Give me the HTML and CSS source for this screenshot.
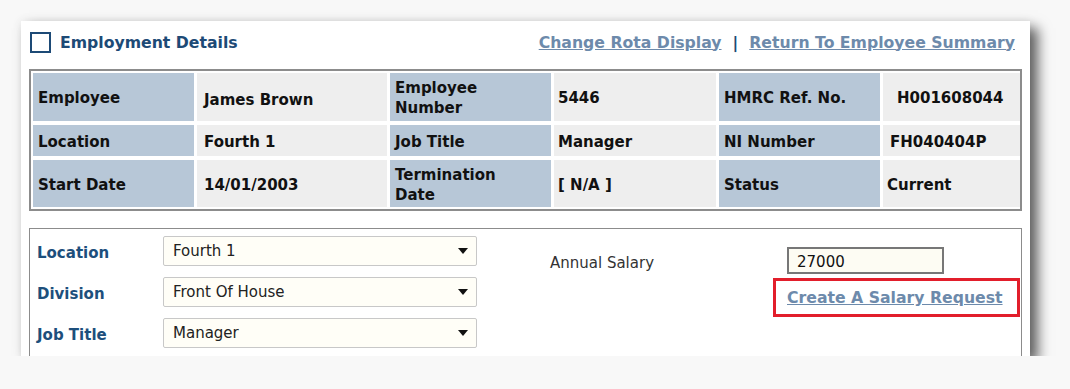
FILE: index.html
```html
<!DOCTYPE html>
<html lang="en">
    <head>
        <meta charset="UTF-8">
        <link rel="stylesheet" href="styles.css">
        <title>Employment Details</title>
    </head>
    <body>
        <div class="panel">
            <div class="panel-header">
                <div class="title">
                    <span class="checkbox"></span>
                    <span>Employment Details</span>
                </div>
                <div class="links">
                    <a href="#">Change Rota Display</a>
                    <span class="sep">|</span>
                    <a href="#">Return To Employee Summary</a>
                </div>
            </div>

            <div class="details">
                <div class="label">Employee</div>
                <div class="value v1 first">James Brown</div>
                <div class="label">Employee<br>Number</div>
                <div class="value v2">5446</div>
                <div class="label">HMRC Ref. No.</div>
                <div class="value v3">H001608044</div>

                <div class="label">Location</div>
                <div class="value v1">Fourth 1</div>
                <div class="label">Job Title</div>
                <div class="value v2">Manager</div>
                <div class="label">NI Number</div>
                <div class="value v3 ni">FH040404P</div>

                <div class="label">Start Date</div>
                <div class="value v1">14/01/2003</div>
                <div class="label">Termination<br>Date</div>
                <div class="value v2">[ N/A ]</div>
                <div class="label">Status</div>
                <div class="value v3 status">Current</div>
            </div>

            <div class="edit-box">
                <div class="selects">
                    <div class="form-row">
                        <label>Location</label>
                        <div class="select"><span>Fourth 1</span><span class="arrow"></span></div>
                    </div>
                    <div class="form-row">
                        <label>Division</label>
                        <div class="select"><span>Front Of House</span><span class="arrow"></span></div>
                    </div>
                    <div class="form-row">
                        <label>Job Title</label>
                        <div class="select"><span>Manager</span><span class="arrow"></span></div>
                    </div>
                </div>
                <div class="salary">
                    <div class="salary-label">Annual Salary</div>
                    <div class="salary-field">
                        <input type="text" class="salary-input" value="27000">
                        <div class="request-box">
                            <a href="#">Create A Salary Request</a>
                        </div>
                    </div>
                </div>
            </div>
        </div>
    </body>
</html>
```

FILE: styles.css
```css
body {
    margin: 0;
    background-color: #f8f8f8;
    font-family: "DejaVu Sans", sans-serif;
}

.panel {
    margin: 21px 0 0 21px;
    width: 1009px;
    height: 335px;
    padding: 0 8px;
    box-sizing: border-box;
    overflow: hidden;
    background-color: #fff;
    box-shadow: 8px 7px 12px rgba(0, 0, 0, 0.6), 0 0 10px rgba(0, 0, 0, 0.08);
}

.panel-header {
    height: 46px;
    display: flex;
    align-items: center;
    justify-content: space-between;
    padding: 0 7px 4px 1px;
    box-sizing: border-box;
    margin-bottom: 2px;
}

.title {
    display: flex;
    align-items: center;
    gap: 9px;
    color: #1d4a76;
    font-weight: bold;
    font-size: 15.7px;
}

.checkbox {
    width: 17px;
    height: 17px;
    border: 2.5px solid #1d4a76;
}

.links {
    display: flex;
    align-items: center;
    gap: 11px;
    font-size: 15.7px;
    font-weight: bold;
}

.links a {
    color: #6d8aab;
}

.sep {
    color: #1d4a76;
}

.details {
    border: 2px solid #8c8c8c;
    padding: 2px;
    display: grid;
    grid-template-columns: 161px 190px 161px 162px 161px 137px;
    grid-template-rows: 48px 31px 47px;
    column-gap: 3px;
    row-gap: 4px;
    font-size: 15px;
    font-weight: bold;
    color: #111;
}

.label,
.value {
    display: flex;
    align-items: center;
    line-height: 20px;
    padding-top: 2px;
}

.label {
    background-color: #b7c7d7;
    padding-left: 5px;
}

.value {
    background-color: #eeeeee;
}

.v1 {
    padding-left: 7px;
}

.first {
    padding-top: 6px;
}

.v2 {
    padding-left: 4px;
}

.v3 {
    padding-left: 14px;
}

.ni {
    padding-left: 7px;
}

.status {
    padding-left: 4px;
}

.edit-box {
    margin-top: 17px;
    border: 1px solid #8c8c8c;
    height: 160px;
    display: flex;
    padding: 7px 0 0 7px;
}

.selects {
    display: flex;
    flex-direction: column;
    gap: 11px;
}

.form-row {
    display: flex;
    align-items: center;
}

.form-row label {
    width: 126px;
    color: #1d4f7c;
    font-weight: bold;
    font-size: 15px;
    padding-top: 4px;
}

.select {
    width: 314px;
    height: 30px;
    box-sizing: border-box;
    border: 1px solid #c8c8c8;
    border-radius: 2px;
    background-color: #fffef7;
    display: flex;
    align-items: center;
    justify-content: space-between;
    padding: 0 8px 0 9px;
    font-size: 15px;
    color: #222;
}

.arrow {
    width: 0;
    height: 0;
    border-left: 5px solid transparent;
    border-right: 5px solid transparent;
    border-top: 6px solid #111;
}

.salary {
    display: flex;
    margin-left: 73px;
    padding-top: 11px;
}

.salary-label {
    width: 223px;
    font-size: 15px;
    color: #333;
    padding-top: 7px;
}

.salary-input {
    display: block;
    margin-left: 14px;
    width: 157px;
    height: 27px;
    box-sizing: border-box;
    border: 2px solid #777;
    background-color: #fdfcf3;
    padding: 2px 8px 0;
    font-family: "DejaVu Sans", sans-serif;
    font-size: 15px;
    color: #111;
}

.request-box {
    margin-top: 4px;
    width: 247px;
    height: 39px;
    box-sizing: border-box;
    border: 3px solid #e21e2b;
    display: flex;
    align-items: center;
    padding-left: 11px;
}

.request-box a {
    color: #6d8aab;
    font-weight: bold;
    font-size: 15.7px;
}
```
